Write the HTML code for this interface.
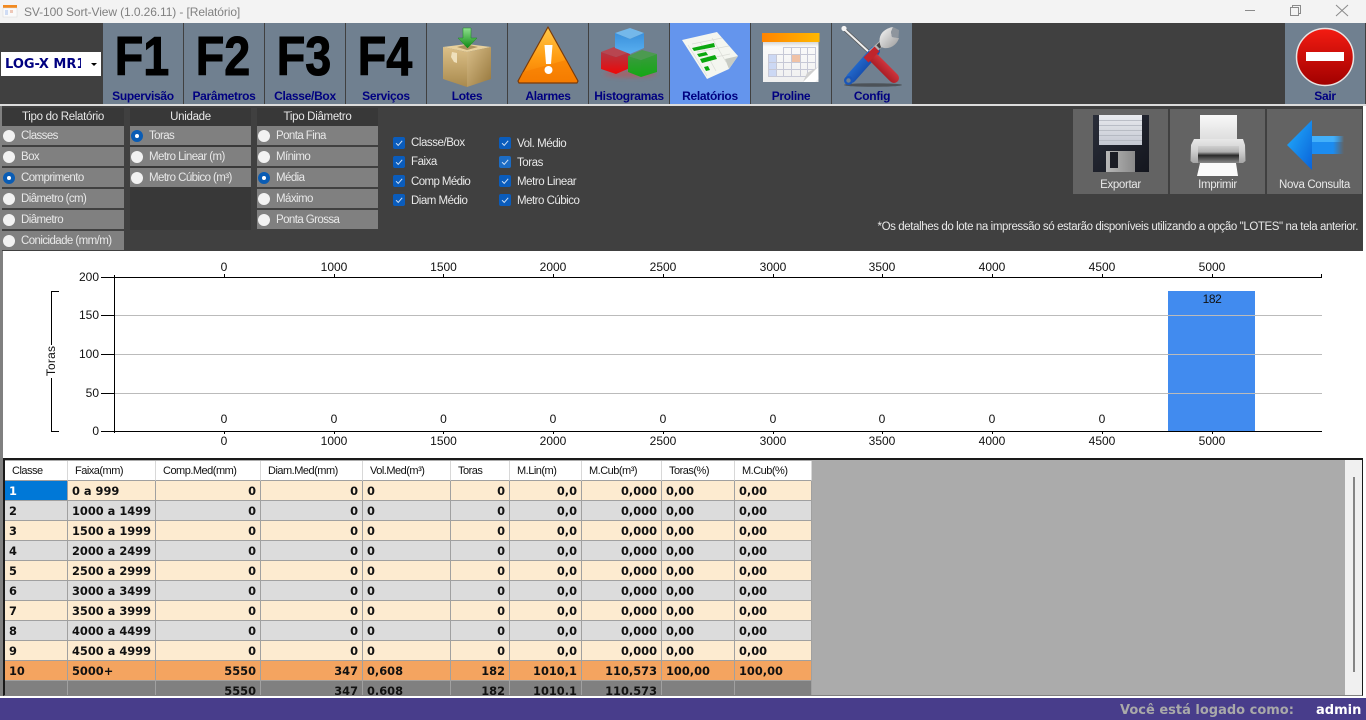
<!DOCTYPE html>
<html lang="pt"><head><meta charset="utf-8"><title>SV-100 Sort-View</title>
<style>
html,body{margin:0;padding:0;width:1366px;height:720px;overflow:hidden;background:#fff;font-family:"Liberation Sans",sans-serif;}
div{box-sizing:border-box;}
.a{position:absolute;white-space:nowrap;}
.btn{position:absolute;top:23px;width:80px;height:81px;background:#708090;text-align:center;color:#000080;font-weight:bold;font-size:12px;letter-spacing:-.3px;}
.btn .l{position:absolute;left:-4px;right:-4px;top:66px;line-height:14px;}
.btn .f{position:absolute;left:-1px;right:1px;top:2px;line-height:62px;font-size:55px;letter-spacing:0;color:#000;transform:scaleX(.85);-webkit-text-stroke:1px #000;}
.h{position:absolute;top:109px;width:122px;height:17px;color:#e8e8e8;font-size:11.5px;letter-spacing:-.3px;line-height:17px;text-align:center;}
.hb{position:absolute;top:108px;height:18px;background:#383838;}
.o{position:absolute;width:122px;height:19px;background:#808080;color:#e8e8e8;font-size:11.5px;letter-spacing:-.58px;line-height:21px;padding-left:19px;white-space:nowrap;}
.o:before{content:"";position:absolute;left:1px;top:4px;width:12px;height:12px;border-radius:50%;background:#f2f2f2;}
.o.s:before{left:1px;top:4px;width:4px;height:4px;background:#fff;border:4px solid #0a5cb4;box-sizing:content-box;}
.c{position:absolute;width:12px;height:12px;border-radius:2px;background:#0a5cbc;}
.c svg{position:absolute;left:0;top:0;}
.t{position:absolute;color:#e8e8e8;font-size:11.5px;letter-spacing:-.45px;line-height:14px;white-space:nowrap;}
.bb{position:absolute;top:109px;width:95px;height:85px;background:#636363;}
.bb span{position:absolute;left:0;right:0;top:69px;text-align:center;color:#e8e8e8;font-size:11.5px;letter-spacing:-.35px;line-height:14px;}
table{border-collapse:separate;border-spacing:0;table-layout:fixed;width:807px;}
th,td{box-sizing:border-box;height:20px;padding:0;border-right:1px solid #a0a0a0;border-bottom:1px solid #a0a0a0;overflow:hidden;white-space:nowrap;}
th{background:#fff;font-weight:normal;font-size:11px;letter-spacing:-.5px;color:#111;text-align:left;padding:1px 0 0 7px;border-color:#d8d8d8;border-bottom-color:#a0a0a0;}
td{font-family:"DejaVu Sans",sans-serif;font-weight:bold;font-size:11.4px;color:#111;padding:1px 4px 0;}
td.r{text-align:right;}
tr.x td{background:#fdebd0;}
tr.y td{background:#dcdcdc;}
tr.z td{background:#f4a460;}
tr.w td{background:#808080;}
td.sel{background:#0078d7 !important;color:#fff;}
</style></head><body>

<!-- title bar -->
<div class="a" style="left:0;top:0;width:1366px;height:23px;background:#f3f3f3"></div>
<div class="a" style="left:24px;top:5px;font-size:12px;letter-spacing:-.1px;line-height:15px;color:#808080">SV-100 Sort-View (1.0.26.11) - [Relatório]</div>

<!-- toolbar -->
<div class="a" style="left:0;top:23px;width:1366px;height:81px;background:#404040"></div>
<div class="a" style="left:1px;top:52px;width:100px;height:24px;background:#fff"></div>
<div class="a" style="left:5px;top:57px;width:76px;overflow:hidden;font-family:'DejaVu Sans',sans-serif;font-weight:bold;font-size:13px;line-height:16px;color:#000080">LOG-X MR1</div>
<div class="a" style="left:91px;top:63px;width:0;height:0;border-left:3px solid transparent;border-right:3px solid transparent;border-top:3px solid #000"></div>

<div class="btn" style="left:103px"><div class="f">F1</div><div class="l">Supervisão</div></div>
<div class="btn" style="left:184px"><div class="f">F2</div><div class="l">Parâmetros</div></div>
<div class="btn" style="left:265px"><div class="f">F3</div><div class="l">Classe/Box</div></div>
<div class="btn" style="left:346px"><div class="f">F4</div><div class="l">Serviços</div></div>
<div class="btn" style="left:427px"><div class="l">Lotes</div></div>
<div class="btn" style="left:508px"><div class="l">Alarmes</div></div>
<div class="btn" style="left:589px"><div class="l">Histogramas</div></div>
<div class="btn" style="left:670px;background:#6495ed"><div class="l">Relatórios</div></div>
<div class="btn" style="left:751px"><div class="l">Proline</div></div>
<div class="btn" style="left:832px"><div class="l">Config</div></div>
<div class="btn" style="left:1285px"><div class="l">Sair</div></div>
<div class="a" style="left:0;top:104px;width:1366px;height:2px;background:#dcdcdc"></div>

<!-- options panel -->
<div class="a" style="left:0;top:106px;width:1363px;height:145px;background:#404040"></div>
<div class="a" style="left:0;top:106px;width:2px;height:145px;background:#808080"></div>
<div class="a" style="left:130px;top:108px;width:121px;height:122px;background:#383838"></div>
<div class="hb" style="left:2px;width:122px"></div>
<div class="hb" style="left:257px;width:121px"></div>

<div class="h" style="left:2px">Tipo do Relatório</div>
<div class="o" style="left:2px;top:126px">Classes</div>
<div class="o" style="left:2px;top:147px">Box</div>
<div class="o s" style="left:2px;top:168px">Comprimento</div>
<div class="o" style="left:2px;top:189px">Diâmetro (cm)</div>
<div class="o" style="left:2px;top:210px">Diâmetro</div>
<div class="o" style="left:2px;top:231px">Conicidade (mm/m)</div>

<div class="h" style="left:130px;width:121px">Unidade</div>
<div class="o s" style="left:130px;top:126px;width:121px">Toras</div>
<div class="o" style="left:130px;top:147px;width:121px">Metro Linear (m)</div>
<div class="o" style="left:130px;top:168px;width:121px">Metro Cúbico (m³)</div>

<div class="h" style="left:257px;width:121px">Tipo Diâmetro</div>
<div class="o" style="left:257px;top:126px;width:121px">Ponta Fina</div>
<div class="o" style="left:257px;top:147px;width:121px">Mínimo</div>
<div class="o s" style="left:257px;top:168px;width:121px">Média</div>
<div class="o" style="left:257px;top:189px;width:121px">Máximo</div>
<div class="o" style="left:257px;top:210px;width:121px">Ponta Grossa</div>

<div class="c" style="left:393px;top:137px"><svg width="12" height="12"><path d="M3 6.2 5.2 8.4 9.2 3.8" fill="none" stroke="#cfe0f5" stroke-width="1"/></svg></div>
<div class="c" style="left:393px;top:156px"><svg width="12" height="12"><path d="M3 6.2 5.2 8.4 9.2 3.8" fill="none" stroke="#cfe0f5" stroke-width="1"/></svg></div>
<div class="c" style="left:393px;top:175px"><svg width="12" height="12"><path d="M3 6.2 5.2 8.4 9.2 3.8" fill="none" stroke="#cfe0f5" stroke-width="1"/></svg></div>
<div class="c" style="left:393px;top:194px"><svg width="12" height="12"><path d="M3 6.2 5.2 8.4 9.2 3.8" fill="none" stroke="#cfe0f5" stroke-width="1"/></svg></div>
<div class="c" style="left:499px;top:137px"><svg width="12" height="12"><path d="M3 6.2 5.2 8.4 9.2 3.8" fill="none" stroke="#cfe0f5" stroke-width="1"/></svg></div>
<div class="c" style="left:499px;top:156px;background:#1c6cc4"><svg width="12" height="12"><path d="M3 6.2 5.2 8.4 9.2 3.8" fill="none" stroke="#cfe0f5" stroke-width="1"/></svg></div>
<div class="c" style="left:499px;top:175px"><svg width="12" height="12"><path d="M3 6.2 5.2 8.4 9.2 3.8" fill="none" stroke="#cfe0f5" stroke-width="1"/></svg></div>
<div class="c" style="left:499px;top:194px"><svg width="12" height="12"><path d="M3 6.2 5.2 8.4 9.2 3.8" fill="none" stroke="#cfe0f5" stroke-width="1"/></svg></div>
<div class="t" style="left:411px;top:136px">Classe/Box</div>
<div class="t" style="left:411px;top:155px">Faixa</div>
<div class="t" style="left:411px;top:175px;letter-spacing:-.6px">Comp Médio</div>
<div class="t" style="left:411px;top:194px;letter-spacing:-.5px">Diam Médio</div>
<div class="t" style="left:517px;top:137px">Vol. Médio</div>
<div class="t" style="left:517px;top:156px">Toras</div>
<div class="t" style="left:517px;top:175px">Metro Linear</div>
<div class="t" style="left:517px;top:194px;letter-spacing:-.5px">Metro Cúbico</div>

<div class="bb" style="left:1073px"><span>Exportar</span></div>
<div class="bb" style="left:1170px"><span>Imprimir</span></div>
<div class="bb" style="left:1267px"><span>Nova Consulta</span></div>
<div class="t" style="right:8px;top:220px;letter-spacing:-.4px">*Os detalhes do lote na impressão só estarão disponíveis utilizando a opção "LOTES" na tela anterior.</div>

<!-- left edge -->
<div class="a" style="left:0;top:251px;width:3px;height:445px;background:#808080"></div>

<!-- chart -->
<div class="a" style="left:1168px;top:291px;width:87px;height:140px;background:#418bef"></div>
<svg class="a" style="left:0;top:251px" width="1366" height="208" viewBox="0 251 1366 208" font-family="'Liberation Sans',sans-serif" font-size="12" fill="#111">
<g stroke="#bbb" stroke-width="1"><path d="M115 315.5H1322M115 354.5H1322M115 393.5H1322"/></g>
<g stroke="#000" stroke-width="1" fill="none">
<path d="M114.5 275V433M101 277.5H1322M101 431.5H1322M101 315.5H114M101 354.5H114M101 393.5H114"/>
<path d="M224.5 274V277M334.5 274V277M443.5 274V277M553.5 274V277M663.5 274V277M773.5 274V277M882.5 274V277M992.5 274V277M1102.5 274V277M1212.5 274V277M1321.5 274V277"/>
<path d="M224.5 431V434M334.5 431V434M443.5 431V434M553.5 431V434M663.5 431V434M773.5 431V434M882.5 431V434M992.5 431V434M1102.5 431V434M1212.5 431V434"/>
<path d="M59 291.5H51.5V345M51.5 378V431.5H59"/>
</g>
<g text-anchor="end"><text x="99" y="281">200</text><text x="99" y="319">150</text><text x="99" y="358">100</text><text x="99" y="397">50</text><text x="99" y="435">0</text></g>
<g text-anchor="middle">
<text x="224" y="271">0</text><text x="334" y="271">1000</text><text x="443.5" y="271">1500</text><text x="553" y="271">2000</text><text x="663" y="271">2500</text><text x="773" y="271">3000</text><text x="882" y="271">3500</text><text x="992" y="271">4000</text><text x="1102" y="271">4500</text><text x="1212" y="271">5000</text>
<text x="224" y="445">0</text><text x="334" y="445">1000</text><text x="443.5" y="445">1500</text><text x="553" y="445">2000</text><text x="663" y="445">2500</text><text x="773" y="445">3000</text><text x="882" y="445">3500</text><text x="992" y="445">4000</text><text x="1102" y="445">4500</text><text x="1212" y="445">5000</text>
<text x="224" y="423">0</text><text x="334" y="423">0</text><text x="443.5" y="423">0</text><text x="553" y="423">0</text><text x="663" y="423">0</text><text x="773" y="423">0</text><text x="882" y="423">0</text><text x="992" y="423">0</text><text x="1102" y="423">0</text>
<text x="1212" y="303" letter-spacing="-.4">182</text>
<text transform="translate(55,361) rotate(-90)" font-size="12" letter-spacing=".2">Toras</text>
</g>
</svg>

<!-- grid frame -->
<div class="a" style="left:3px;top:458px;width:1360px;height:238px;background:#ababab;border-top:2px solid #1a1a1a;border-left:2px solid #1a1a1a;border-right:1px solid #1a1a1a;border-bottom:1px solid #808080"></div>
<div class="a" style="left:1345px;top:460px;width:17px;height:235px;background:#f0f0f0"></div>
<div class="a" style="left:1353px;top:477px;width:2px;height:195px;background:#858585"></div>
<div class="a" style="left:5px;top:460px;width:807px;height:235px;overflow:hidden;">
<table style="margin-top:1px">
<colgroup><col style="width:63px"><col style="width:88px"><col style="width:105px"><col style="width:102px"><col style="width:88px"><col style="width:59px"><col style="width:72px"><col style="width:80px"><col style="width:73px"><col style="width:77px"></colgroup>
<tr><th>Classe</th><th>Faixa(mm)</th><th>Comp.Med(mm)</th><th>Diam.Med(mm)</th><th>Vol.Med(m³)</th><th>Toras</th><th>M.Lin(m)</th><th>M.Cub(m³)</th><th>Toras(%)</th><th>M.Cub(%)</th></tr>
<tr class="x"><td class="sel">1</td><td>0 a 999</td><td class="r">0</td><td class="r">0</td><td>0</td><td class="r">0</td><td class="r">0,0</td><td class="r">0,000</td><td>0,00</td><td>0,00</td></tr>
<tr class="y"><td>2</td><td>1000 a 1499</td><td class="r">0</td><td class="r">0</td><td>0</td><td class="r">0</td><td class="r">0,0</td><td class="r">0,000</td><td>0,00</td><td>0,00</td></tr>
<tr class="x"><td>3</td><td>1500 a 1999</td><td class="r">0</td><td class="r">0</td><td>0</td><td class="r">0</td><td class="r">0,0</td><td class="r">0,000</td><td>0,00</td><td>0,00</td></tr>
<tr class="y"><td>4</td><td>2000 a 2499</td><td class="r">0</td><td class="r">0</td><td>0</td><td class="r">0</td><td class="r">0,0</td><td class="r">0,000</td><td>0,00</td><td>0,00</td></tr>
<tr class="x"><td>5</td><td>2500 a 2999</td><td class="r">0</td><td class="r">0</td><td>0</td><td class="r">0</td><td class="r">0,0</td><td class="r">0,000</td><td>0,00</td><td>0,00</td></tr>
<tr class="y"><td>6</td><td>3000 a 3499</td><td class="r">0</td><td class="r">0</td><td>0</td><td class="r">0</td><td class="r">0,0</td><td class="r">0,000</td><td>0,00</td><td>0,00</td></tr>
<tr class="x"><td>7</td><td>3500 a 3999</td><td class="r">0</td><td class="r">0</td><td>0</td><td class="r">0</td><td class="r">0,0</td><td class="r">0,000</td><td>0,00</td><td>0,00</td></tr>
<tr class="y"><td>8</td><td>4000 a 4499</td><td class="r">0</td><td class="r">0</td><td>0</td><td class="r">0</td><td class="r">0,0</td><td class="r">0,000</td><td>0,00</td><td>0,00</td></tr>
<tr class="x"><td>9</td><td>4500 a 4999</td><td class="r">0</td><td class="r">0</td><td>0</td><td class="r">0</td><td class="r">0,0</td><td class="r">0,000</td><td>0,00</td><td>0,00</td></tr>
<tr class="z"><td>10</td><td>5000+</td><td class="r">5550</td><td class="r">347</td><td>0,608</td><td class="r">182</td><td class="r">1010,1</td><td class="r">110,573</td><td>100,00</td><td>100,00</td></tr>
<tr class="w"><td></td><td></td><td class="r">5550</td><td class="r">347</td><td>0,608</td><td class="r">182</td><td class="r">1010,1</td><td class="r">110,573</td><td></td><td></td></tr>
</table>
</div>

<!-- status bar -->
<div class="a" style="left:0;top:698px;width:1366px;height:22px;background:#483d8b"></div>
<div class="a" style="left:1120px;top:703px;font-family:'DejaVu Sans',sans-serif;font-weight:bold;font-size:13px;line-height:16px;color:#a9a9a9">Você está logado como:</div>
<div class="a" style="left:1316px;top:703px;font-family:'DejaVu Sans',sans-serif;font-weight:bold;font-size:13px;line-height:16px;color:#fff">admin</div>

<!-- icons -->
<svg class="a" style="left:0;top:0;pointer-events:none" width="1366" height="251" viewBox="0 0 1366 251">
<defs>
<linearGradient id="bxL" x1="0" y1="0" x2="0" y2="1"><stop offset="0" stop-color="#dcc088"/><stop offset="1" stop-color="#a98a4e"/></linearGradient>
<linearGradient id="bxR" x1="0" y1="0" x2="1" y2="1"><stop offset="0" stop-color="#d8bd88"/><stop offset="1" stop-color="#96773c"/></linearGradient>
<linearGradient id="grn" x1="0" y1="0" x2="0" y2="1"><stop offset="0" stop-color="#8fe08f"/><stop offset="1" stop-color="#0e8a12"/></linearGradient>
<linearGradient id="war" x1="0" y1="0" x2="0" y2="1"><stop offset="0" stop-color="#ffc94a"/><stop offset=".55" stop-color="#ff9c12"/><stop offset="1" stop-color="#f57a00"/></linearGradient>
<linearGradient id="cbl" x1="0" y1="0" x2="0" y2="1"><stop offset="0" stop-color="#3a90dc"/><stop offset="1" stop-color="#5ab0f0"/></linearGradient>
<linearGradient id="cr" x1="0" y1="0" x2="0" y2="1"><stop offset="0" stop-color="#b03844"/><stop offset="1" stop-color="#ee0808"/></linearGradient>
<linearGradient id="cg" x1="0" y1="0" x2="0" y2="1"><stop offset="0" stop-color="#3a9a3e"/><stop offset="1" stop-color="#14a814"/></linearGradient>
<linearGradient id="cal" x1="0" y1="0" x2="1" y2="0"><stop offset="0" stop-color="#ff8400"/><stop offset="1" stop-color="#ffb800"/></linearGradient>
<linearGradient id="calb" x1="0" y1="0" x2="0" y2="1"><stop offset="0" stop-color="#d0d0d0"/><stop offset=".14" stop-color="#fafafa"/><stop offset="1" stop-color="#f0f0f0"/></linearGradient>
<linearGradient id="rd" x1="0" y1="0" x2="0" y2="1"><stop offset="0" stop-color="#f41c12"/><stop offset="1" stop-color="#a00000"/></linearGradient>
<linearGradient id="fl" x1="0" y1="0" x2="1" y2="1"><stop offset="0" stop-color="#2a2e3a"/><stop offset="1" stop-color="#14161e"/></linearGradient>
<linearGradient id="lab" x1="0" y1="0" x2="0" y2="1"><stop offset="0" stop-color="#e8eaee"/><stop offset="1" stop-color="#c4c8d2"/></linearGradient>
<linearGradient id="shu" x1="0" y1="0" x2="1" y2="0"><stop offset="0" stop-color="#b8b8b8"/><stop offset="1" stop-color="#8a8a8a"/></linearGradient>
<linearGradient id="pp" x1="0" y1="0" x2="0" y2="1"><stop offset="0" stop-color="#f8f8f8"/><stop offset="1" stop-color="#d8d8d8"/></linearGradient>
<linearGradient id="pb" x1="0" y1="0" x2="0" y2="1"><stop offset="0" stop-color="#e8e8e8"/><stop offset=".5" stop-color="#d0d0d0"/><stop offset="1" stop-color="#a4a4a4"/></linearGradient>
<linearGradient id="pm" x1="0" y1="0" x2="0" y2="1"><stop offset="0" stop-color="#cfcfcf"/><stop offset=".35" stop-color="#b0b0b0"/><stop offset=".55" stop-color="#2a2a2a"/><stop offset="1" stop-color="#8a8a8a"/></linearGradient>
<linearGradient id="arr" x1="0" y1="0" x2="1" y2="1"><stop offset="0" stop-color="#22b0ff"/><stop offset="1" stop-color="#0a62d8"/></linearGradient>
<linearGradient id="arrs" x1="0" y1="0" x2="1" y2="0"><stop offset="0" stop-color="#1c8cf0"/><stop offset=".72" stop-color="#1c8cf0"/><stop offset="1" stop-color="#1c8cf0" stop-opacity="0"/></linearGradient>
<linearGradient id="arrt" x1="0" y1="0" x2="1" y2="0"><stop offset="0" stop-color="#54c0ff"/><stop offset=".72" stop-color="#54c0ff"/><stop offset="1" stop-color="#54c0ff" stop-opacity="0"/></linearGradient>
<linearGradient id="blu" gradientUnits="userSpaceOnUse" x1="847" y1="60" x2="870" y2="80"><stop offset="0" stop-color="#2c7ce0"/><stop offset="1" stop-color="#0c3a98"/></linearGradient>
<linearGradient id="red2" gradientUnits="userSpaceOnUse" x1="890" y1="60" x2="874" y2="76"><stop offset="0" stop-color="#e04048"/><stop offset="1" stop-color="#900c14"/></linearGradient>
<linearGradient id="met" x1="0" y1="0" x2="1" y2="1"><stop offset="0" stop-color="#f8f8f8"/><stop offset="1" stop-color="#9a9a9a"/></linearGradient>
<filter id="b2" x="-30%" y="-100%" width="160%" height="300%"><feGaussianBlur stdDeviation="2"/></filter>
</defs>

<!-- app icon -->
<rect x="3" y="5" width="14" height="3" fill="#f28a20"/><rect x="3" y="8" width="14" height="9" fill="#fafafa" stroke="#d8d8d8" stroke-width=".5"/><rect x="5" y="10" width="3" height="5" fill="#cfdcf4"/><rect x="10" y="10" width="3" height="3" fill="#eec8b8"/>

<!-- window controls -->
<path d="M1245 10.5H1255" stroke="#8a8a8a" fill="none"/>
<path d="M1290.5 7.5H1298.5V15.5H1290.5ZM1292.5 7.5V5.5H1300.5V13.5H1298.5" stroke="#8a8a8a" fill="none"/>
<path d="M1336 5 1348 16M1348 5 1336 16" stroke="#8a8a8a" fill="none"/>

<!-- box -->
<path d="M443 47 467 44 491 47 467 52Z" fill="#e8d09c"/>
<path d="M443 47 467 52V87L443 79Z" fill="url(#bxL)"/>
<path d="M491 47 467 52V87L491 79Z" fill="url(#bxR)"/>
<path d="M452 52 457 53 457 63 454 62 451 57Z" fill="#efe0bc"/>
<path d="M457 47 467 44.5 478 47 467 50Z" fill="#7a5e2c" opacity=".55"/>
<path d="M463 28H471V38H477L467.5 48 458 38H463Z" fill="url(#grn)" stroke="#1a8a1e" stroke-width=".5"/>

<!-- warning -->
<path d="M548 27 578 81 577 83H519L518 81Z" fill="url(#war)" stroke="#7a3a08" stroke-width="1.2" stroke-linejoin="round"/>
<path d="M523 72 566 60 577 81 576 82H520L519 81Z" fill="#f57c00" opacity=".55"/>
<path d="M544.5 45H552.5L551 64H546Z" fill="#fff"/><circle cx="548.5" cy="70" r="4" fill="#fff"/>

<!-- cubes -->
<ellipse cx="630" cy="74" rx="26" ry="3.5" fill="#d04848" opacity=".5" filter="url(#b2)"/>
<path d="M601 52 614 47 630 52 616 57Z" fill="#b84650"/>
<path d="M616 57V74L630 68V52Z" fill="url(#cr)"/>
<path d="M601 52 616 57V74L601 69Z" fill="url(#cr)"/>
<path d="M628 56 642 50 657 54 641 60Z" fill="#4c9a50"/>
<path d="M641 60V77L628 72V56Z" fill="url(#cg)"/>
<path d="M641 60 657 54V72L641 77Z" fill="url(#cg)"/>
<path d="M615 33 630 28 644 33 630 39Z" fill="#74b8ea"/>
<path d="M615 33 630 39V54L615 48Z" fill="url(#cbl)"/>
<path d="M630 39 644 33V48L630 54Z" fill="url(#cbl)"/>

<!-- report -->
<path d="M682 40 717 32 738 56 729 69 707 79Z" fill="#f4f6f0"/>
<path d="M729 69 738 56 725 59Z" fill="#c8ccc4"/>
<path d="M692 44 722 38M697 52 729 46M702 60 730 54M688 45 707 76M700 42 716 71M712 38 726 62" stroke="#dadcd6" stroke-width=".7" fill="none"/>
<path d="M692 48 714 43 715 47 694 51Z" fill="#0aa80e"/>
<path d="M697 54 706 52 708 55 699 57Z" fill="#0aa80e"/>
<path d="M700 59 715 55 717 59 702 63Z" fill="#0aa80e"/>
<path d="M704 67 708 66 710 70 706 71Z" fill="#0aa80e"/>

<!-- calendar -->
<rect x="763" y="41" width="55.5" height="41" fill="url(#calb)"/>
<rect x="762" y="33" width="57.5" height="9" fill="url(#cal)"/>
<rect x="791" y="54" width="9" height="8" fill="#f0c2a6"/>
<rect x="768" y="54" width="8" height="22" fill="#ccd8f4"/>
<path d="M768.5 54.5H815.5M768.5 62.5H815.5M768.5 69.5H815.5M768.5 76.5H807.5M768.5 54V77M776.5 54V77M783.5 47V77M791.5 47V77M800.5 47V77M807.5 47V77M815.5 47V69M783.5 47.5H815.5" stroke="#c6c8d6" stroke-width="1" fill="none"/>
<path d="M803 82 818 67 818.5 79 815 82Z" fill="#fff"/><path d="M803 82 807 73 818 67Z" fill="#cfcfcf"/>

<!-- tools -->
<ellipse cx="873" cy="85" rx="29" ry="1.8" fill="#333" opacity=".6"/>
<path d="M844 29 870 53" stroke="#555" stroke-width="3.5" stroke-linecap="round"/>
<path d="M844 29 870 53" stroke="#eee" stroke-width="2" stroke-linecap="round"/>
<circle cx="844" cy="28.5" r="2.6" fill="#f4f4f4"/>
<path d="M851 78 875 51" stroke="url(#blu)" stroke-width="10" stroke-linecap="round"/>
<circle cx="848.5" cy="80.5" r="4.5" fill="#1a56b8"/><circle cx="848.5" cy="80.5" r="2.2" fill="#708090"/>
<path d="M871 53 883 42" stroke="#b4b4b4" stroke-width="6"/>
<path d="M878 47 884 41" stroke="#444" stroke-width="4.5"/>
<path d="M881 47C877 38 881 29 893 27L891 32 892 37 899 38C897 45 890 49 884 48Z" fill="url(#met)"/>
<path d="M893 27 899 30 898.5 37.5 892 37 891 32Z" fill="#8e959d"/>
<path d="M874 58 894 78" stroke="url(#red2)" stroke-width="10" stroke-linecap="round"/>
<path d="M866 60 877 49" stroke="#c0242c" stroke-width="7"/>
</svg>

<svg class="a" style="left:1285px;top:23px;pointer-events:none" width="81" height="66" viewBox="1285 23 81 66">
<circle cx="1325" cy="57" r="28.5" fill="url(#rd)" stroke="#e8e4e4" stroke-width="1.5"/>
<rect x="1306" y="52" width="38" height="9" fill="#fff"/>
</svg>

<svg class="a" style="left:1073px;top:109px;pointer-events:none" width="293" height="70" viewBox="1073 109 293 70">
<!-- floppy -->
<path d="M1093 115H1149V172H1093Z" fill="url(#fl)"/>
<rect x="1099" y="115" width="43" height="30" fill="url(#lab)"/>
<path d="M1099 120.5H1142M1099 125.5H1142M1099 130.5H1142M1099 135.5H1142M1099 140.5H1142" stroke="#aeb2bc" stroke-width=".7"/>
<rect x="1106" y="151" width="29" height="21" fill="url(#shu)"/>
<rect x="1110" y="152" width="8" height="16" fill="#1a1c24"/>
<!-- printer -->
<rect x="1200" y="115" width="37" height="30" fill="url(#pp)"/>
<path d="M1194 139H1243L1245 145 1245.5 161 1243 163H1193L1190.5 161 1191 145Z" fill="url(#pb)"/>
<rect x="1198" y="146" width="41" height="17" fill="url(#pm)"/>
<path d="M1197 176 1200 163H1236L1238 176Z" fill="#fafafa"/>
<!-- arrow -->
<rect x="1305" y="136" width="39" height="18" fill="url(#arrs)"/>
<rect x="1305" y="136" width="39" height="6" fill="url(#arrt)" opacity=".7"/>
<path d="M1287 145 1312 120V170Z" fill="url(#arr)"/>
</svg>

</body></html>
